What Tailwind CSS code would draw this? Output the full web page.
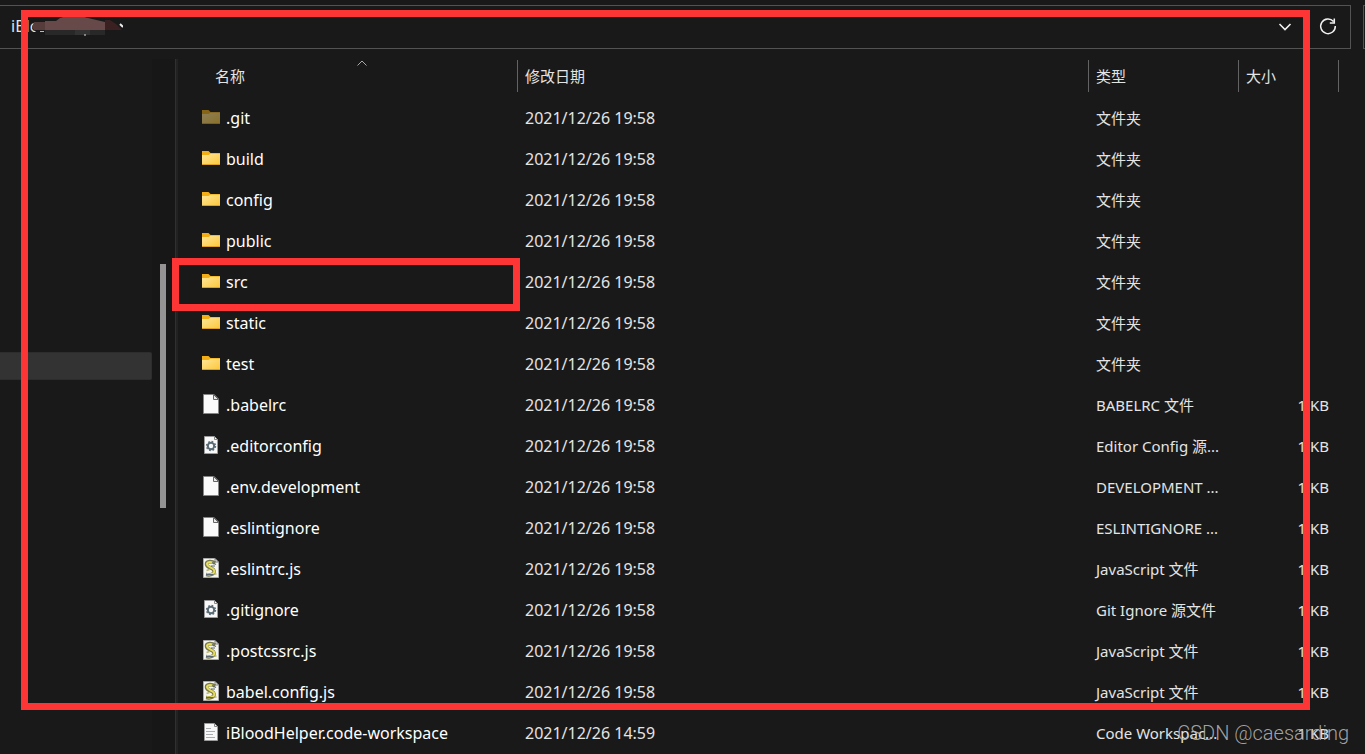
<!DOCTYPE html>
<html lang="zh-CN">
<head>
<meta charset="utf-8">
<title>iBloodHelper</title>
<script src="https://cdn.jsdelivr.net/npm/@tailwindcss/browser@4"></script>
</head>
<body class="bg-[#191919] text-[#e4e4e4] text-[15px] leading-5 font-['Noto_Sans','Noto_Sans_CJK_SC',sans-serif]">
<svg class="absolute h-0 w-0" aria-hidden="true">
  <defs>
    <linearGradient id="fold" x1="0" y1="0" x2="1" y2="1"><stop offset="0" stop-color="#ffe79b"/><stop offset="1" stop-color="#fdc83c"/></linearGradient>
    <symbol id="folder" viewBox="0 0 18 14">
      <path d="M0 0h6.5l2 2H18v12H0z" fill="#f3ae16"/>
      <path d="M0 4h6.5l2-1.3H18V13H0z" fill="url(#fold)"/>
      <path d="M0 13h18v1H0z" fill="#dda02a"/>
    </symbol>
    <symbol id="file" viewBox="0 0 18 20">
      <path d="M1.5.5H12L16.500 5v14.500h-15z" fill="#fafafa" stroke="#858585"/>
      <path d="M11.500.5V5.500h5z" fill="#e8e8e8" stroke="#666"/>
    </symbol>
    <symbol id="gear" viewBox="0 0 18 20">
      <path d="M2.500 1.500h10l3 3v14h-13z" fill="#f8f8f8" stroke="#9b9b9b"/>
      <path d="M12.500 1.500v3h3" fill="none" stroke="#888"/>
      <circle cx="9" cy="11" r="3.200" fill="none" stroke="#5a6b76" stroke-width="2"/>
      <circle cx="9" cy="11" r="4.500" fill="none" stroke="#5a6b76" stroke-width="1.400" stroke-dasharray="1.767 1.767"/>
    </symbol>
    <symbol id="js" viewBox="0 0 18 20">
      <path d="M1.500.5H13L16.500 4v15.500h-15z" fill="#f5f5f1" stroke="#aaa"/>
      <path d="M13 .5V4h3.500" fill="none" stroke="#777"/>
      <path d="M13 5C10 3 4.500 3 4.500 6s3 3 5.500 4.500 3 4 .5 5.500-4 .8-6.500.5" fill="none" stroke="#77774c" stroke-width="3.600"/>
      <path d="M11 5C8.500 3.500 5 4 5 6s3 3 5.500 4.500 2.500 4 0 5.200-4 .6-6 .5" fill="none" stroke="#e6de5c" stroke-width="2"/>
      <path d="M10 4.500l4 2M9 8h4M4 16.500h7" stroke="#5c6870" stroke-width="1.200"/>
      <path d="M4.500 12.500l3-1M12.500 16h2" stroke="#b9b86e" stroke-width="1.500"/>
    </symbol>
    <symbol id="doc" viewBox="0 0 18 20">
      <path d="M2.500 1.500h10l3 3v14h-13z" fill="#f8f8f8" stroke="#9b9b9b"/>
      <path d="M12.500 1.500v3h3" fill="none" stroke="#888"/>
      <path d="M4 6.500h5M4 9.500h9M4 12.500h7M4 15.500h9" stroke="#a9adb0"/>
    </symbol>
  </defs>
</svg>
<div class="relative flex min-h-screen flex-col overflow-hidden">
  <header class="mt-[5px] flex h-11 shrink-0 gap-3">
    <div class="flex min-w-0 flex-1 items-center border border-l-0 border-[#535353] pl-[11px]">
      <nav class="relative flex flex-1 items-center gap-1 pb-0.5" aria-label="路径">
        <span class="text-base leading-5">iBloodHelper</span>
        <svg class="absolute left-4 top-0 h-6 w-24" viewBox="27 16 96 24" aria-hidden="true">
          <path d="M45 16h78v24H41V32h-5l-4-4 4-6z" fill="#191919"/>
          <path d="M34 22h11v8H34l-2-3z" fill="#573c3c"/>
          <path d="M45 21h11l4-3 6-2h15l7 2 17 4v8H45z" fill="#674949"/>
          <path d="M105 20h5l6 4 6 6h-17z" fill="#3b2021"/>
          <path d="M45 30h60v5H45z" fill="#282828"/><path d="M75 30h15v5H75z" fill="#323232"/>
          <path d="M120 24l3 3" stroke="#eee" stroke-width="2"/><path d="M84 35h2" stroke="#ddd"/><path d="M40 31.500h4" stroke="#bbb"/>
        </svg>
      </nav>
      <button class="flex h-10 w-10 items-center justify-center" aria-label="展开">
        <svg class="h-3 w-4" viewBox="0 0 16 12" fill="none" stroke="#f0f0f0" stroke-width="1.600"><path d="M1.500 3L7 8.500 12.500 3"/></svg>
      </button>
      <button class="flex h-10 w-11 items-center justify-center" aria-label="刷新">
        <svg class="h-5 w-5" viewBox="0 0 20 20" fill="none" stroke="#f0f0f0" stroke-width="1.500"><path d="M15.500 4.500A7.300 7.300 0 1 0 17.300 9M16.300 1.500V6h-4.500"/></svg>
      </button>
    </div>
    <div class="w-0.5 border border-r-0 border-[#535353]"></div>
  </header>
  <div class="flex flex-1 pt-[10px]">
    <aside class="flex w-[178px] shrink-0 border-r-2 border-[#222]">
      <div class="flex-1 pt-[293px]"><div class="h-7 rounded-r-xs border border-l-0 border-[#2d2d2d] bg-[#333]"></div></div>
      <div class="flex w-6 border-r border-[#303030] bg-[#171717] pl-2 pt-[205px]"><div class="h-[244px] w-1.5 bg-[#949494]"></div></div>
    </aside>
    <main class="min-w-0 flex-1 pr-[26px] pt-px">
      <table class="w-full table-fixed border-collapse text-left">
        <colgroup><col class="w-[340px]"><col><col class="w-[150px]"><col class="w-[100px]"></colgroup>
        <thead>
          <tr class="h-[37px] align-top">
            <th class="p-0 font-normal"><button class="relative flex h-8 w-full items-center border-r border-[#636363] pl-[37px]">名称
              <svg class="absolute left-[178px] top-0 h-2 w-3" viewBox="0 0 12 8" fill="none" stroke="#aaa"><path d="M1.500 5.500L6 1l4.500 4.500"/></svg></button></th>
            <th class="p-0 font-normal"><button class="flex h-8 w-full items-center border-r border-[#636363] pl-[7px]">修改日期</button></th>
            <th class="p-0 font-normal"><button class="flex h-8 w-full items-center border-r border-[#636363] pl-[7px]">类型</button></th>
            <th class="p-0 font-normal"><button class="flex h-8 w-full items-center border-r border-[#636363] pl-[7px]">大小</button></th>
          </tr>
        </thead>
        <tbody id="rows"></tbody>
      </table>
    </main>
  </div>
  <div class="absolute left-[21px] right-[55px] top-[10px] h-[700px] border-7 border-[#fd3535]"></div>
  <div class="absolute left-[172px] top-[258px] h-[53px] w-[348px] border-7 border-[#fd3535]"></div>
  <div class="absolute right-4 top-[721px] font-[Roboto,sans-serif] text-[20px] font-light leading-6 text-[#b4b4b4]/90">CSDN @caesarding</div>
</div>
<script>
const files = [
  ['folder', '.git', '文件夹'], ['folder', 'build', '文件夹'], ['folder', 'config', '文件夹'],
  ['folder', 'public', '文件夹'], ['folder', 'src', '文件夹'], ['folder', 'static', '文件夹'], ['folder', 'test', '文件夹'],
  ['file', '.babelrc', 'BABELRC 文件'], ['gear', '.editorconfig', 'Editor Config 源...'],
  ['file', '.env.development', 'DEVELOPMENT ...'], ['file', '.eslintignore', 'ESLINTIGNORE ...'],
  ['js', '.eslintrc.js', 'JavaScript 文件'], ['gear', '.gitignore', 'Git Ignore 源文件'],
  ['js', '.postcssrc.js', 'JavaScript 文件'], ['js', 'babel.config.js', 'JavaScript 文件'],
  ['doc', 'iBloodHelper.code-workspace', 'Code Workspac...']
];
document.getElementById('rows').innerHTML = files.map(([icon, name, type]) => `
  <tr class="h-[41px] whitespace-nowrap">
    <td class="p-0 pl-6 text-base leading-5 text-white"><div class="flex items-center gap-1.5">
      <svg class="${icon === 'folder' ? 'h-3.5 w-[18px] -mt-0.5' : 'h-5 w-[18px] -mt-0.5'} ${name === '.git' ? 'opacity-50' : ''}" aria-hidden="true"><use href="#${icon}"/></svg>${name}</div></td>
    <td class="p-0 pl-[7px] text-base leading-5">2021/12/26 ${icon === 'doc' ? '14:59' : '19:58'}</td>
    <td class="p-0 pl-[7px]">${type}</td>
    <td class="p-0 pr-[10px] text-right">${icon === 'folder' ? '' : '1 KB'}</td>
  </tr>`).join('');
</script>
</body>
</html>
